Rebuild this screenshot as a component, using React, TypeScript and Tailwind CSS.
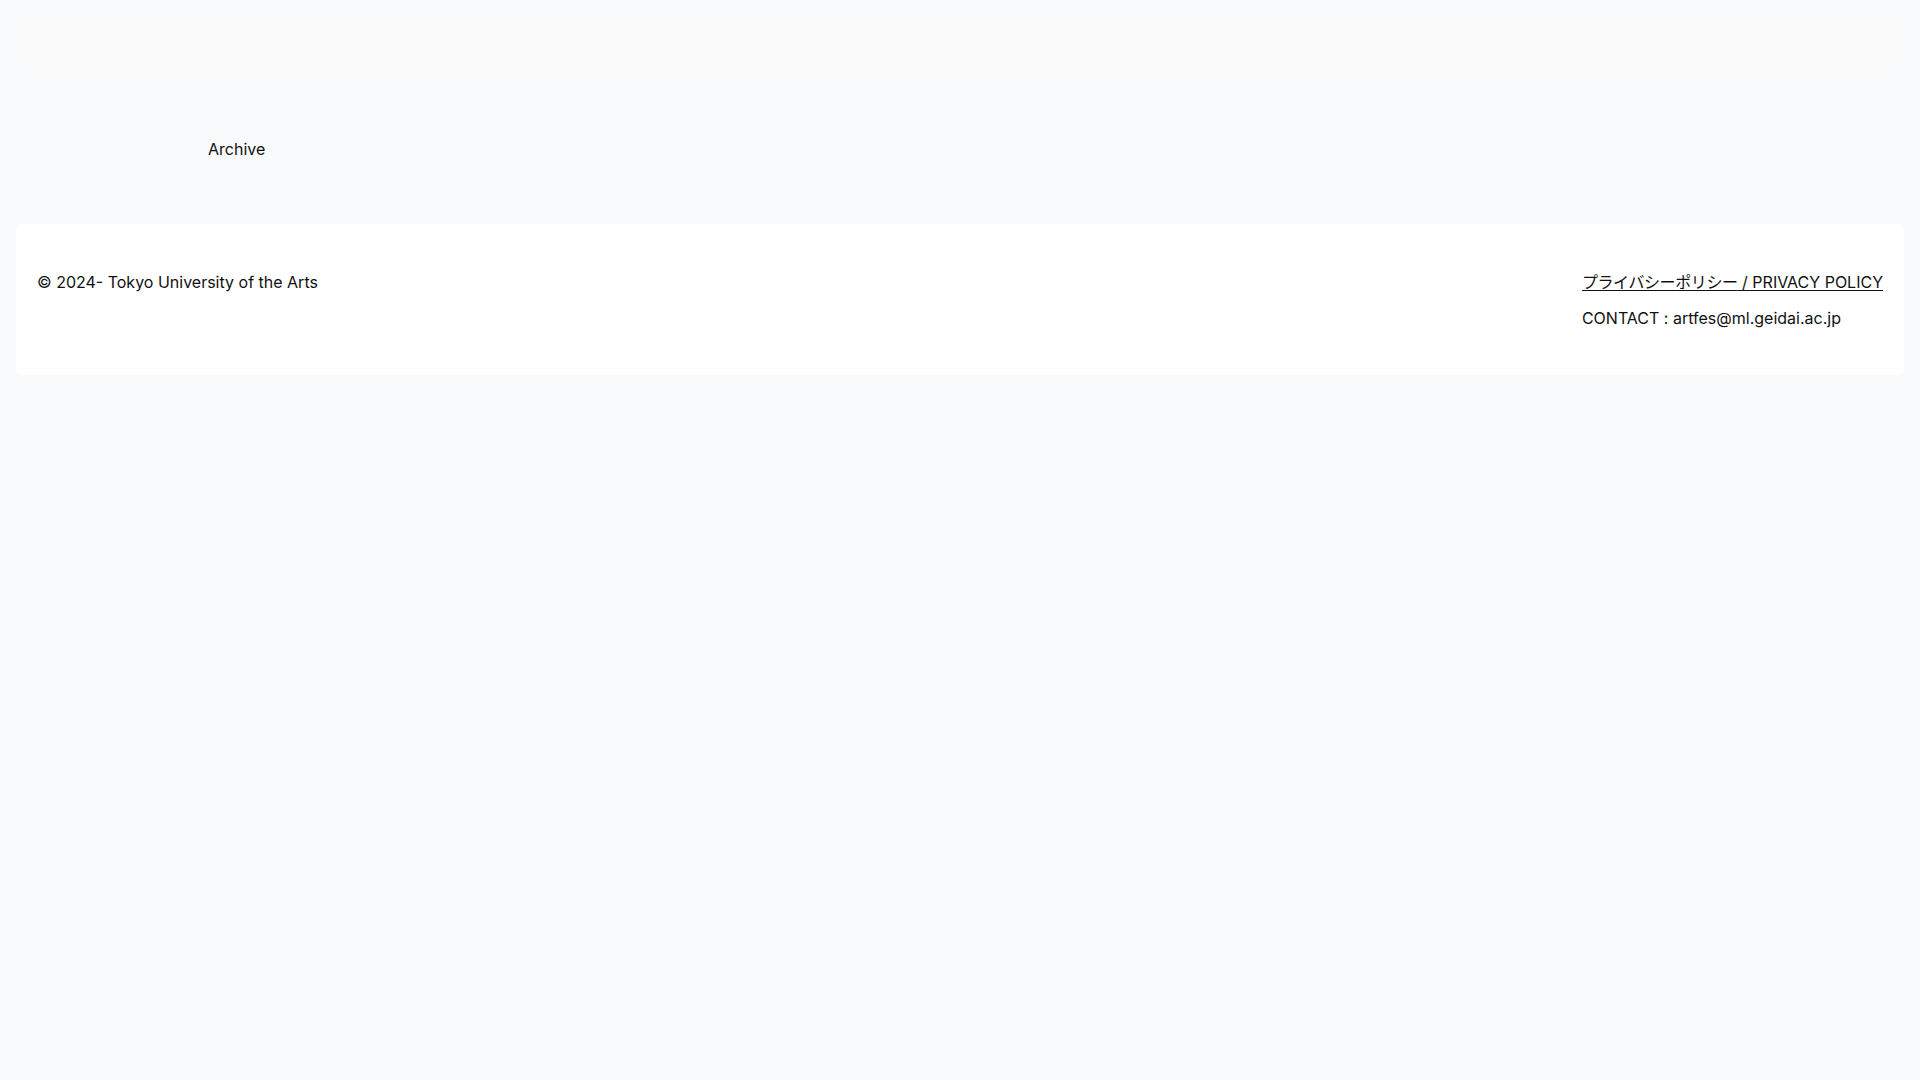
import React from 'react';

export default function App() {
  return (
    <div
      className="min-h-screen bg-[#f9fafb] text-[#111111]"
      style={{ fontFamily: 'Inter, "Noto Sans CJK JP", sans-serif' }}
    >
      <header className="pt-[14px]">
        <div className="mx-[24px] h-[56px] bg-[#fafbfa]" />
      </header>

      <nav className="pl-[208px] pt-[67px] pb-[63px]">
        <a href="#" className="block text-[16px] leading-[24px]">
          Archive
        </a>
      </nav>

      <footer className="mx-[16px] rounded-md bg-white px-[21px] pt-[46px] pb-[45px]">
        <div className="flex justify-between">
          <p className="text-[16px] leading-[24px]">© 2024- Tokyo University of the Arts</p>
          <div className="flex flex-col gap-[12px] text-[16px] leading-[24px]">
            <a href="#" className="underline underline-offset-2">
              <span className="tracking-[-0.4px]">プライバシーポリシー</span> / PRIVACY POLICY
            </a>
            <p className="[font-feature-settings:'calt'_0]">CONTACT : artfes@ml.geidai.ac.jp</p>
          </div>
        </div>
      </footer>
    </div>
  );
}
